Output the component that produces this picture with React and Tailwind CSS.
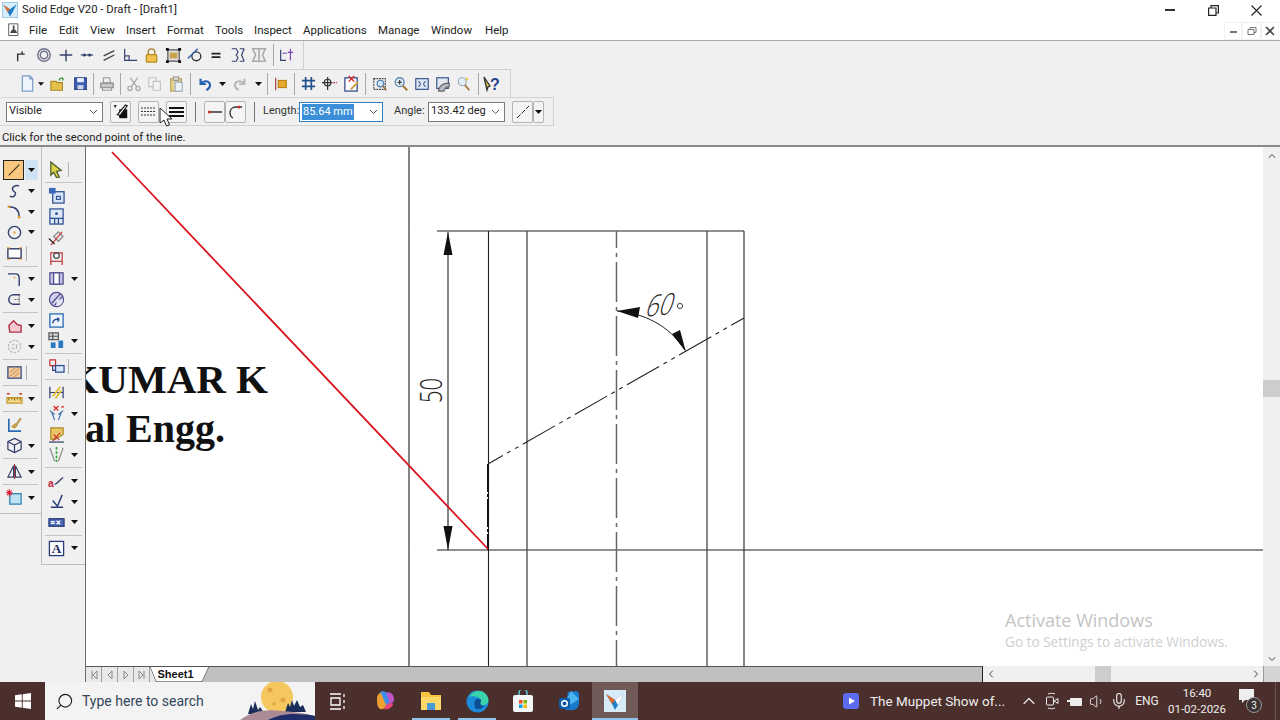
import { ChevronUp, ChevronLeft, ChevronRight, Search, Volume1, Mic } from 'lucide-react';

const Icon = ({ size = 18, children }) => (
  <svg width={size} height={size} viewBox="0 0 18 18" fill="none" strokeWidth="1.3">
    {children}
  </svg>
);

const Drop = () => (
  <svg width="7" height="4" viewBox="0 0 7 4">
    <path d="M0 0h7L3.5 4z" fill="#111" />
  </svg>
);

// toolbar icons
const top = {
  corner: <path d="M3 16V8h8M8 8V5" stroke="#333" strokeWidth="1.6" />,
  ring: <g stroke="#6f7088"><circle cx="9" cy="9" r="7" strokeWidth="1.6" /><circle cx="9" cy="9" r="4.2" strokeWidth="1.6" /></g>,
  cross: <path d="M2 9h14M9 3v13" stroke="#34406e" strokeWidth="1.6" />,
  link: <g><path d="M2 9h14" stroke="#34406e" /><circle cx="6" cy="9" r="1.8" fill="#34406e" /><circle cx="12" cy="9" r="1.8" fill="#34406e" /></g>,
  par: <path d="M3 10 15 4M3 15 15 9" stroke="#444" strokeWidth="1.5" />,
  perp: <path d="M3 2v13h14M3 10h5v5" stroke="#34406e" />,
  lock: <g><path d="M5.5 8V5.5a3.5 3.5 0 0 1 7 0V8" stroke="#a5822a" strokeWidth="1.5" /><rect x="3.5" y="8" width="11" height="8" rx="1" fill="#f1c34e" stroke="#b58a20" /></g>,
  fit: <g><rect x="3" y="3" width="12" height="12" fill="#ddd" stroke="#555" /><rect x="5" y="6" width="8" height="6" fill="#c9a24a" /><path d="M1 1h3v3H1zM14 1h3v3h-3zM1 14h3v3H1zM14 14h3v3h-3z" fill="#111" /></g>,
  tang: <g><circle cx="10.5" cy="10.5" r="5" stroke="#333" strokeWidth="1.5" /><path d="M1 13 12 2" stroke="#2d5fa8" strokeWidth="1.5" /></g>,
  eq: <path d="M4 6.5h10v2H4zM4 10.5h10v2H4z" fill="#222" />,
  sym: <path d="M2 2h5l2 4-2 3 2 3-2 4H2M16 2h-5M16 16h-5M16 2l-3 7 3 7" stroke="#34406e" />,
  symOff: <path d="M2 2h14l-3 7 3 7H2l3-7zM9 2v14" stroke="#aaa" strokeWidth="1.8" />,
  meas: <g stroke="#7a3fb0"><path d="M3 3v12h6" stroke="#34406e" /><path d="M5 7h5M14 2v13M11 6h6" /></g>,
};

const std = {
  file: <g><path d="M3.5 1h8l3 3v13h-11z" fill="#eef4fc" stroke="#7d9cc6" /><path d="M11.5 1v3h3" stroke="#7d9cc6" /></g>,
  open: <g><path d="M1 6h6l1 1.5h6V16H1z" fill="#e6c24c" stroke="#a9892a" /><path d="M10 5c1-3 3-3 5-2m0 0-2-1m2 1-1 2" stroke="#3a9a38" strokeWidth="1.5" /></g>,
  save: <g><path d="M2 2h14v14H2z" fill="#3e5fb0" stroke="#2a4488" /><rect x="5" y="2.5" width="8" height="5" fill="#e8eefa" /><rect x="5.5" y="11" width="7" height="5" fill="#c9d4ec" /></g>,
  print: <g><path d="M5 2h7l1 6H5z" fill="#eee" stroke="#999" /><path d="M2 8h14v5H2z" fill="#c8c8c8" stroke="#8a8a8a" /><path d="M4 13h10v3H4z" fill="#eee" stroke="#999" /></g>,
  cut: <g stroke="#a9a9a9" strokeWidth="1.5"><path d="M5 2l7 10M13 2 6 12" /><circle cx="4.5" cy="14" r="2.3" /><circle cx="13.5" cy="14" r="2.3" /></g>,
  copy: <g fill="#f4f4f4" stroke="#c2c2c2"><path d="M2 2h8v10H2z" /><path d="M7 6h8v10H7z" /></g>,
  paste: <g><rect x="3" y="3" width="12" height="14" fill="#e7d28c" stroke="#b5a35c" /><rect x="6" y="1" width="6" height="4" fill="#ddd" stroke="#999" /><rect x="8" y="7" width="8" height="10" fill="#eef2f8" stroke="#9fb0c8" /></g>,
  undo: <path d="M4 3v6h6M4.5 8.5C7 5 13 5 14.5 9c1 3-1 5-4 7" stroke="#2260b4" strokeWidth="2.4" />,
  redo: <path d="M14 3v6H8M13.5 8.5C11 5 5 5 3.5 9c-1 3 1 5 4 7" stroke="#b9b9b9" strokeWidth="2.4" />,
  flag: <g><path d="M3 2v14" stroke="#a94f4f" strokeWidth="1.5" /><rect x="6" y="5" width="9" height="8" fill="#e8a92c" stroke="#b9831a" /></g>,
  grid: <path d="M6 2v14M12 2v14M2 6h14M2 12h14" stroke="#22508f" strokeWidth="1.8" />,
  snap: <g stroke="#333"><circle cx="7" cy="8" r="3.5" /><path d="M7 2v14M1 8h11" /><path d="M13 8h4" stroke="#c33" strokeDasharray="2 1" /></g>,
  pin: <g><rect x="2" y="3" width="13" height="14" fill="#fff" stroke="#2a4488" /><path d="M6 1l6 6M12 1 6 7" stroke="#d22" strokeWidth="1.4" /><path d="M8 14l7-7 1.5 1.5-7 7H8z" fill="#c9a24a" /></g>,
  zoomArea: <g><rect x="2" y="3" width="13" height="12" stroke="#444" strokeDasharray="2 1" /><circle cx="9.5" cy="8.5" r="3.7" fill="#cfe4f6" stroke="#4d7cab" /><path d="m12 11 4 5" stroke="#9b6a37" strokeWidth="1.8" /></g>,
  zoom: <g><circle cx="7.5" cy="7" r="5" fill="#dcecf8" stroke="#5c86b0" strokeWidth="1.5" /><path d="M5 7h5M7.5 4.5v5" stroke="#333" /><path d="m11 11 5 5" stroke="#a8743d" strokeWidth="2.2" /></g>,
  fitAll: <g><rect x="2" y="3" width="14" height="12" fill="#dfe9f6" stroke="#31518a" /><path d="M5 6l2.5 2.5M13 6l-2.5 2.5M5 12l2.5-2.5M13 12l-2.5-2.5" stroke="#31518a" strokeWidth="1.3" /></g>,
  hand: <g><rect x="2" y="2" width="13" height="12" fill="#e2e8f2" stroke="#31518a" /><path d="M4 17c0-5 4-9 12-9v4c-3 0-5 2-6 5z" fill="#b9bcc6" stroke="#666" /></g>,
  wand: <g><circle cx="7" cy="6.5" r="4.5" fill="#e6eef6" stroke="#9aaabc" /><path d="m10 10 5 6" stroke="#a8743d" strokeWidth="2" /><path d="M12 1l-2 5 4-2z" fill="#e8c440" /></g>,
  help: <g><path d="M1 2l6 9-2 1-1 3-3-13z" fill="#d8c548" stroke="#333" /><text x="7" y="15" fontFamily="Liberation Sans" fontWeight="700" fontSize="16" fill="#2a4488">?</text></g>,
};

const left = {
  line: <path d="M3 15 15 3" stroke="#4a3a1c" strokeWidth="1.4" />,
  curve: <path d="M14 3c-4-1-8 1-7 4s4 2 3 5-4 3-6 2" stroke="#34406e" strokeWidth="1.5" />,
  arc: <g><path d="M3 4c7 0 11 4 11 11" stroke="#34406e" strokeWidth="1.5" /><circle cx="3" cy="4" r="1.4" fill="#e89a2a" /><circle cx="14" cy="15" r="1.4" fill="#e89a2a" /></g>,
  circle: <g><circle cx="9" cy="9" r="6.5" stroke="#34406e" strokeWidth="1.5" /><circle cx="9" cy="9" r="1.2" fill="#e89a2a" /></g>,
  rect: <g><rect x="2" y="4" width="14" height="10" stroke="#34406e" strokeWidth="1.5" fill="#fff" /><path d="M1 3h3M14 3h3M1 15h3M14 15h3" stroke="#e89a2a" strokeWidth="1.4" /></g>,
  fillet: <g><path d="M2 3h8c3 0 4 2 4 5v8" stroke="#34406e" strokeWidth="1.5" /><circle cx="9" cy="7" r="1" fill="#e89a2a" /></g>,
  trim: <g><path d="M15 4H8a5 5 0 0 0 0 10h7" stroke="#34406e" strokeWidth="1.6" /><path d="M9 9h6M14 4v10" stroke="#777" strokeDasharray="2 1" /></g>,
  area: <path d="M3 9l5-5 4 4 4 1v7H4z" fill="#f3c9cf" stroke="#b3344a" strokeWidth="1.5" />,
  gear: <g stroke="#bbb" strokeWidth="1.5" strokeDasharray="2.5 1.5"><circle cx="9" cy="9" r="6.5" /><circle cx="9" cy="9" r="2.5" /></g>,
  hatch: <g><rect x="2" y="3" width="14" height="12" fill="#f0cfa4" stroke="#3d4f80" strokeWidth="1.4" /><path d="M4 13 14 5M4 9l6-5M8 14l6-5" stroke="#d99a5a" /></g>,
  dim: <g><path d="M1 8h16v6H1z" fill="#f2d98a" stroke="#c79a30" /><path d="M3 8v3M6 8v2M9 8v3M12 8v2M15 8v3" stroke="#9a7720" /><path d="M1 4h3M14 4h3" stroke="#c33" strokeWidth="1.4" /></g>,
  brush: <g><path d="M3 3v13h13" stroke="#2a6cb4" strokeWidth="1.8" /><path d="M6 11l4-3 2 2-3 3zM11 8l4-6 1 1-4 6z" fill="#d4a23c" stroke="#8a6820" strokeWidth=".6" /></g>,
  cube: <g stroke="#34406e" strokeWidth="1.3"><path d="M9 1.5 16 5v8l-7 3.5L2 13V5z" /><path d="M2 5l7 3.5L16 5M9 8.5v8" /></g>,
  mirror: <g stroke="#34406e" strokeWidth="1.2"><path d="M8 3v12H2zM10 3v12h6z" /><path d="M9 1v16" stroke="#a63a3a" /></g>,
  pt: <g><rect x="4" y="5" width="12" height="11" fill="#bfe3f3" stroke="#2a80b0" /><path d="M1 1.5l5 5M6 1.5l-5 5M3.5 0v8M0 4h7" stroke="#e0223a" strokeWidth="1.1" /></g>,
};

const right = {
  sel: <path d="M3 1l11 9-5 1 3 6-3 .5-3-5.5-3 3z" fill="#dbd34a" stroke="#4a5a2a" />,
  a: <g><rect x="5" y="5" width="12" height="12" fill="#d6e6f6" stroke="#2a4d90" /><rect x="1" y="1" width="7" height="6" fill="#3e69ba" /><rect x="9" y="10" width="4" height="3" fill="#fff" stroke="#2a4d90" /></g>,
  b: <g><rect x="2" y="1" width="14" height="16" fill="#dde7f6" stroke="#2a4d90" /><path d="M2 11h14M7 11v6M11 11v6" stroke="#2a4d90" /><circle cx="9" cy="6" r="1.5" fill="#2a4d90" /></g>,
  c: <g><path d="M6 8l5-5 5 5-5 5z" fill="#eee" stroke="#888" /><path d="M3 17l12-14" stroke="#c33" strokeWidth="1.3" /><path d="M1 10l6 6" stroke="#222" strokeWidth="1.4" /></g>,
  d: <g><rect x="3" y="4" width="12" height="9" stroke="#b33" strokeWidth="1.2" /><circle cx="9" cy="7" r="3" stroke="#444" /><path d="M3 13v4M15 13v4" stroke="#b33" /></g>,
  e: <g><rect x="2" y="3" width="14" height="12" fill="#c8c4e6" stroke="#4a4a8a" /><rect x="6" y="3" width="6" height="12" fill="#fff" stroke="#4a4a8a" /></g>,
  f: <g><circle cx="9" cy="9" r="7.5" fill="#d4d0ec" stroke="#4a4a8a" /><path d="M4 13 13 3M7 15l8-9" stroke="#4a4a8a" /><path d="M9 9h7a7 7 0 0 1-7 7z" fill="#e6e6f2" /></g>,
  g: <g><rect x="2" y="2" width="14" height="14" fill="#eef4fb" stroke="#2a6cb4" strokeWidth="1.4" /><path d="M5 12c0-4 4-5 7-4m0 0-2-2m2 2-2 2" stroke="#2a4d90" strokeWidth="1.5" /></g>,
  h: <g><path d="M1 1h10v7H1zM1 4.5h10M5 1v7" stroke="#555" fill="#ddd" /><rect x="3" y="11" width="5" height="6" fill="#2a7ac0" /><rect x="11" y="9" width="5" height="8" fill="#2a7ac0" /></g>,
  i: <g><path d="M2 2h6v6H2z" stroke="#c33" strokeWidth="1.3" /><path d="M5 8v5h6" stroke="#34406e" /><rect x="8" y="8" width="9" height="7" fill="#d8e6f6" stroke="#2a4d90" /></g>,
  j: <g><path d="M2 3v12M16 3v12M2 9h14" stroke="#34406e" /><path d="M5 13l8-10M8 15l6-8" stroke="#e3b82c" strokeWidth="1.8" /></g>,
  k: <g><path d="M4 8l3 8M14 8l-3 8M2 6l5 4M16 6l-5 4" stroke="#3d6db0" strokeWidth="1.2" /><path d="M6 1l5 5M11 1 6 6" stroke="#d22" /><path d="M14 2h3" stroke="#d22" /></g>,
  l: <g><path d="M3 2h13v7l-8 5H3z" fill="#ecc766" stroke="#a9892a" /><path d="M5 16 13 7M6 9l6 6" stroke="#c33" /><path d="M1 17h16" stroke="#34406e" /></g>,
  m: <g><path d="M9 1v16" stroke="#3aa83a" strokeWidth="1.8" strokeDasharray="3 1.5" /><path d="M2 2l5 14M16 2l-5 14" stroke="#888" strokeWidth="1.3" /></g>,
  n: <g><text x="0" y="15" fontFamily="Liberation Sans" fontSize="11" fontWeight="700" fill="#c2253a">a</text><path d="M7 12c3 0 4-4 9-7" stroke="#34406e" strokeWidth="1.5" /></g>,
  o: <g><path d="M3 15h13M5 8l5 6 5-12" stroke="#2a3a7a" strokeWidth="1.5" /></g>,
  p: <g><rect x="1" y="5" width="16" height="8" fill="#4a6ab4" stroke="#2a3a7a" /><path d="M9 7l4 4M13 7l-4 4M3 8h4M3 10h4" stroke="#fff" /></g>,
  q: <g><rect x="1.5" y="1.5" width="15" height="15" fill="#fff" stroke="#2a3a7a" strokeWidth="1.4" /><text x="4" y="14" fontFamily="Liberation Serif" fontSize="14" fontWeight="700" fill="#1c2a62">A</text></g>,
};

const Sep = () => <div className="mx-[3px] w-px h-[22px] shrink-0 bg-[#a8a8a8]" />;

const Slot = ({ w = 'w-[21px]', children }) => (
  <div className={`${w} h-full flex items-center justify-center shrink-0`}>{children}</div>
);

const Menu = () => (
  <div className="h-[20px] pt-[1px] flex items-center bg-white text-[11.500px] text-[#222]">
    <div className="w-[29px] pl-[7px] flex">
      <Icon size={15}>
        <path d="M2 1h11v14H2z" fill="#fff" stroke="#444" strokeWidth="1" />
        <path d="M7 3h2v5H7zM4 11l2-3h4l2 3v1H4z" fill="#444" />
      </Icon>
    </div>
    <span className="w-[30px]">File</span>
    <span className="w-[31px]">Edit</span>
    <span className="w-[36px]">View</span>
    <span className="w-[41px]">Insert</span>
    <span className="w-[48px]">Format</span>
    <span className="w-[39px]">Tools</span>
    <span className="w-[49px]">Inspect</span>
    <span className="w-[75px]">Applications</span>
    <span className="w-[53px]">Manage</span>
    <span className="w-[54px]">Window</span>
    <span>Help</span>
    <div className="ml-auto flex items-center">
      <span className="w-[18px] h-[18px] flex items-center justify-center border border-[#f2f2f2]">
        <span className="mt-[3px] w-[7px] h-[2px] bg-[#777]" />
      </span>
      <span className="w-[19px] h-[18px] flex items-center justify-center border border-[#f2f2f2]">
        <svg width="10" height="10" viewBox="0 0 10 10" fill="none" stroke="#777"><path d="M1 3.5h6v5H1zM3 3.5v-2h6v5H7" /></svg>
      </span>
      <span className="w-[18px] h-[18px] mr-px flex items-center justify-center border border-[#f2f2f2]">
        <svg width="10" height="10" viewBox="0 0 10 10" stroke="#444" strokeWidth="1.6"><path d="M1 1l8 8M9 1 1 9" /></svg>
      </span>
    </div>
  </div>
);

const Row1 = () => (
  <div className="h-[28px] flex">
    <div className="w-[304px] h-full flex items-center pl-[12px] border-r border-[#d0d0d0]">
      {['corner', 'ring', 'cross', 'link', 'par', 'perp', 'lock', 'fit', 'tang', 'eq', 'sym', 'symOff'].map((k) => (
        <Slot key={k} w="w-[21.500px]"><Icon size={k === 'lock' || k === 'fit' ? 17 : 16}>{top[k]}</Icon></Slot>
      ))}
      <Sep />
      <Slot w="w-[18px]"><Icon size={16}>{top.meas}</Icon></Slot>
    </div>
  </div>
);

const Row2 = () => (
  <div className="h-[28px] flex">
    <div className="w-[511px] h-full flex items-center pl-[16px] border-r border-t border-[#d0d0d0]">
      <Slot w="w-[22px]"><Icon size={17}>{std.file}</Icon></Slot>
      <Slot w="w-[6px]"><Drop /></Slot>
      <Slot w="w-[26px]"><span className="ml-[2px] flex"><Icon size={16}>{std.open}</Icon></span></Slot>
      <Slot w="w-[20px]"><Icon size={15}>{std.save}</Icon></Slot>
      <Sep />
      <Slot w="w-[20px]"><Icon size={16}>{std.print}</Icon></Slot>
      <Sep />
      <Slot w="w-[20px]"><Icon size={16}>{std.cut}</Icon></Slot>
      <Slot><Icon size={16}>{std.copy}</Icon></Slot>
      <Slot w="w-[22px]"><Icon size={16}>{std.paste}</Icon></Slot>
      <Sep />
      <Slot w="w-[22px]"><Icon size={16}>{std.undo}</Icon></Slot>
      <Slot w="w-[12px]"><Drop /></Slot>
      <Slot w="w-[24px]"><Icon size={16}>{std.redo}</Icon></Slot>
      <Slot w="w-[12px]"><Drop /></Slot>
      <Sep />
      <Slot w="w-[20px]"><Icon size={16}>{std.flag}</Icon></Slot>
      <Sep />
      <Slot><Icon size={17}>{std.grid}</Icon></Slot>
      <Slot><Icon size={17}>{std.snap}</Icon></Slot>
      <Slot w="w-[22px]"><Icon size={17}>{std.pin}</Icon></Slot>
      <Sep />
      <Slot><Icon size={16}>{std.zoomArea}</Icon></Slot>
      <Slot><Icon size={16}>{std.zoom}</Icon></Slot>
      <Slot><Icon size={16}>{std.fitAll}</Icon></Slot>
      <Slot><Icon size={16}>{std.hand}</Icon></Slot>
      <Slot w="w-[22px]"><Icon size={16}>{std.wand}</Icon></Slot>
      <Sep />
      <Slot w="w-[20px]"><Icon size={18}>{std.help}</Icon></Slot>
    </div>
  </div>
);

const Btn = ({ w = 'w-[21px]', children }) => (
  <div className={`${w} h-[22px] shrink-0 flex items-center justify-center rounded-[2px] border border-[#b4b4b4] bg-[#f4f4f4]`}>
    {children}
  </div>
);

const Select = ({ w, value, selected, focus }) => (
  <div className={`${w} h-[20px] shrink-0 flex items-center justify-between bg-white border pl-[2px] pr-[4px] ${focus ? 'border-[#2f7fc0]' : 'border-[#7a7a7a]'}`}>
    {selected ? <span className="bg-[#3b8fd8] text-white text-[11px] leading-[16px] px-px">{value}</span> : <span className="text-[11px] text-[#222] whitespace-nowrap">{value}</span>}
    <svg width="9" height="6" viewBox="0 0 9 6" fill="none" stroke="#555"><path d="M1 1l3.5 3.5L8 1" /></svg>
  </div>
);

const Row3 = () => (
  <div className="h-[29px] flex">
    <div className="w-[554px] h-full flex items-center pl-[6px] border-r border-t border-b border-[#d4d4d4] text-[11px] text-[#222]">
      <Select w="w-[97px]" value="Visible" />
      <div className="ml-[7px]">
        <Btn>
          <Icon size={16}>
            <path d="M7 6h9v10H7z" fill="#111" />
            <path d="M5 12 14 1l2 1-8 11z" fill="#fff" stroke="#111" />
            <path d="M1 2h3M2.5 1v3" stroke="#111" />
          </Icon>
        </Btn>
      </div>
      <div className="ml-[7px] relative">
        <Btn>
          <svg width="15" height="9" viewBox="0 0 15 9" stroke="#333"><path d="M0 1h15M0 4.500h15M0 8h15" strokeDasharray="2 1" /></svg>
        </Btn>
        {/* mouse pointer */}
        <svg className="absolute left-[21px] top-[6px] z-10" width="14" height="20" viewBox="0 0 14 20">
          <path d="M1 1v15l4-3 2.500 6 3-1-2.500-6h5z" fill="#fff" stroke="#222" />
        </svg>
      </div>
      <div className="ml-[7px]">
        <Btn>
          <svg width="15" height="10" viewBox="0 0 15 10" fill="#111"><path d="M0 0h15v2H0zM0 4h15v2H0zM0 8h15v2H0z" /></svg>
        </Btn>
      </div>
      <div className="mx-[8px] w-px h-[20px] bg-[#777]" />
      <div className="flex">
        <Btn><svg width="14" height="6" viewBox="0 0 14 6"><path d="M0 3h14" stroke="#333" strokeWidth="1.5" /><circle cx="1.500" cy="3" r="1.500" fill="#c33" /></svg></Btn>
        <Btn><svg width="14" height="14" viewBox="0 0 14 14" fill="none"><path d="M13 2H7C3 2 1 5 1 8s1 4 3 5" stroke="#333" strokeWidth="1.3" /><circle cx="10" cy="2" r="1.500" fill="#c33" /></svg></Btn>
      </div>
      <div className="mx-[8px] w-px h-[20px] bg-[#777]" />
      <span className="text-[#333] w-[36px]">Length:</span>
      <Select w="w-[84px]" value="85.64 mm" selected focus />
      <span className="ml-[11px] w-[34px] text-[#333]">Angle:</span>
      <Select w="w-[77px]" value="133.42 deg" />
      <div className="ml-[7px] flex">
        <Btn><svg width="14" height="14" viewBox="0 0 14 14"><path d="M1 13 13 1" stroke="#222" strokeDasharray="5 1.500" /></svg></Btn>
        <Btn w="w-[11px]"><Drop /></Btn>
      </div>
    </div>
  </div>
);

const leftTools = [
  ['curve', 1], ['arc', 1], ['circle', 1], ['rect', 2], 0,
  ['fillet', 1], ['trim', 1], 0,
  ['area', 1], ['gear', 1], 0,
  ['hatch', 2], 0,
  ['dim', 1], 0,
  ['brush', 0], ['cube', 1], 0,
  ['mirror', 1], 0,
  ['pt', 1],
];

const rightTools = [
  ['a', 0], ['b', 0], ['c', 0], ['d', 0], ['e', 1], ['f', 0], ['g', 0], ['h', 1], 0,
  ['i', 2], 0,
  ['j', 0], ['k', 1], ['l', 0], ['m', 1], 0,
  ['n', 1], ['o', 1], ['p', 1], 0,
  ['q', 1],
];

const ToolRow = ({ icon, mode, dropMl }) => (
  <div className="h-[20.700px] flex items-center pl-[5px]">
    <div className="w-[18px] flex justify-center"><Icon size={17}>{icon}</Icon></div>
    {mode === 1 && <div className={`${dropMl} flex`}><Drop /></div>}
    {mode === 2 && <div className="ml-[3px] w-px h-[15px] bg-[#b0b0b0]" />}
  </div>
);

const HSep = () => (
  <div className="h-[5.400px] flex items-center px-[3px]"><div className="w-full h-px bg-[#c4c4c4]" /></div>
);

const LeftPanel = () => (
  <div className="w-[86px] shrink-0 flex bg-[#f0f0f0] border-r border-[#6a6a6a]">
    <div className="w-[41px] h-[367px] pt-[13px] border-b border-[#bdbdbd]">
      <div className="h-[20.700px] flex items-center pl-[3px]">
        <div className="w-[21px] h-[20px] bg-[#f9c77e] border border-[#222] flex items-center justify-center">
          <Icon size={16}>{left.line}</Icon>
        </div>
        <div className="ml-px w-[13px] h-[20px] bg-[#cfe3f5] flex items-center justify-center"><Drop /></div>
      </div>
      {leftTools.map((t, i) => (t ? <ToolRow key={i} icon={left[t[0]]} mode={t[1]} dropMl="ml-[5px]" /> : <HSep key={i} />))}
    </div>
    <div className="w-[44px] h-[418px] pt-[12.500px] border-l border-b border-[#bdbdbd]">
      <ToolRow icon={right.sel} mode={2} dropMl="ml-[6px]" />
      <HSep />
      {rightTools.map((t, i) => (t ? <ToolRow key={i} icon={right[t[0]]} mode={t[1]} dropMl="ml-[6px]" /> : <HSep key={i} />))}
    </div>
  </div>
);

const Drawing = () => (
  <svg className="block w-full h-full bg-white" viewBox="86 147 1177 519" fill="none">
    <text x="268" y="393" textAnchor="end" fontFamily="Liberation Serif" fontWeight="700" fontSize="41" fill="#111">KUMAR K</text>
    <text x="225" y="442" textAnchor="end" fontFamily="Liberation Serif" fontWeight="700" fontSize="40" fill="#111">al Engg.</text>

    <path d="M409 147v519M437 231h307M437 550h826M488.500 231v435M744 231v435M448 232v318" stroke="#222" strokeWidth="1.100" />
    <path d="M527 231v435M707 231v435" stroke="#555" strokeWidth="1.400" />
    <path d="M616.500 231v435" strokeDasharray="40 5 4 5" strokeDashoffset="23" stroke="#666" strokeWidth="1.500" />
    <path d="M488 464 744 318" stroke="#222" strokeWidth="1.100" strokeDasharray="37 5 4 5 4 5" strokeDashoffset="20" />
    <path d="M488 464v86" stroke="#111" strokeWidth="2" strokeDasharray="28 2 3 2" />
    <path d="M617 311c26 2 52 14 68 39" stroke="#222" />
    <path d="M448 232l-4.500 23h9zM448 550l-4.500-24h9zM617 311l23-4-2 11zM686 352l-14-18 8-4z" fill="#111" />
    <path d="M112 152 488 549" stroke="#d8151f" strokeWidth="1.800" />

    <text transform="translate(442 403) rotate(-90)" fontFamily="Open Sans" fontWeight="300" fontSize="31" fill="#222" textLength="25" lengthAdjust="spacingAndGlyphs">50</text>
    <text transform="translate(644 317) rotate(-6) skewX(-24)" fontFamily="Open Sans" fontWeight="300" fontSize="29" fill="#222" textLength="27" lengthAdjust="spacingAndGlyphs">60</text>
    <circle cx="680" cy="306" r="2.600" stroke="#444" />

    <text x="1005" y="627" fontFamily="Open Sans" fontSize="18" fill="#c4c4c4">Activate Windows</text>
    <text x="1005" y="647" fontFamily="Open Sans" fontSize="13.600" fill="#cfcfcf">Go to Settings to activate Windows.</text>
  </svg>
);

const VScroll = () => (
  <div className="w-[17px] shrink-0 flex flex-col items-center bg-[#f0f0f0]">
    <ChevronUp size={12} strokeWidth={2} className="mt-[3px] text-[#444]" />
    <div className="mt-[218px] w-full h-[17px] bg-[#cdcdcd]" />
    <ChevronUp size={12} strokeWidth={2} className="mt-auto mb-[1px] text-[#444] rotate-180" />
  </div>
);

const SheetBar = () => (
  <div className="h-[16px] shrink-0 flex">
    <div className="w-[896px] flex bg-[#c0c0c0] border-t border-[#555]">
      <div className="w-[64px] flex bg-[#e8e8e8]">
        {['M5 2v8M10 2 6 6l4 4z', 'M9 2 5 6l4 4z', 'M5 2l4 4-4 4z', 'M4 2l4 4-4 4zM9 2v8'].map((d) => (
          <div key={d} className="w-[16px] flex items-center justify-center border-r border-[#a0a0a0]">
            <svg width="14" height="12" viewBox="0 0 14 12" fill="none" stroke="#888"><path d={d} /></svg>
          </div>
        ))}
      </div>
      <div className="relative w-[60px] h-full flex items-center justify-center bg-white text-[11px] font-bold text-[#111] font-['Liberation_Sans']">
        <svg className="absolute inset-0" width="60" height="15" viewBox="0 0 60 15" fill="none">
          <path d="M0 0 6 15H52L59 0" stroke="#222" />
          <path d="M52 15 59 0H60V15Z" fill="#c0c0c0" />
          <path d="M0 0 6 15H0Z" fill="#e8e8e8" />
        </svg>
        <span className="relative -ml-[9px]">Sheet1</span>
      </div>
    </div>
    <div className="flex-1 flex items-center bg-[#f0f0f0] border-l border-[#222]">
      <ChevronLeft size={12} strokeWidth={2} className="ml-[2px] text-[#444]" />
      <div className="ml-[98px] w-[16px] h-full bg-[#cdcdcd]" />
      <ChevronRight size={12} strokeWidth={2} className="ml-auto mr-[1px] text-[#444]" />
    </div>
    <div className="w-[17px] bg-[#d4d4d4] border-l border-[#999]" />
  </div>
);

const Task = ({ active, open, children }) => (
  <div className={`relative w-[46px] h-full flex items-center justify-center ${active ? 'bg-[#6f5a58]' : ''}`}>
    {children}
    {open && <div className={`absolute bottom-0 h-[2px] bg-[#8fc4ea] ${active ? 'left-0 right-0' : 'left-[4px] right-[4px]'}`} />}
  </div>
);

const Tray = ({ w = 'w-[22px]', children }) => (
  <div className={`${w} h-full shrink-0 flex items-center justify-center`}>{children}</div>
);

const Taskbar = () => (
  <div className="h-[38px] shrink-0 flex items-center bg-[#4b2f2c] text-white">
    <div className="w-[45px] h-full flex items-center justify-center">
      <svg width="16" height="16" viewBox="0 0 16 16" fill="#fff"><path d="M0 2.300 6.800 1.300V7.500H0zM7.700 1.200 16 0V7.500H7.700zM0 8.500H6.800V14.700L0 13.700zM7.700 8.500H16V16L7.700 14.800z" /></svg>
    </div>
    <div className="relative w-[270px] h-full flex items-center bg-[#f3f3f3] overflow-hidden">
      <Search size={19} strokeWidth={1.500} className="ml-[10px] -scale-x-100 text-[#222]" />
      <span className="ml-[8px] text-[14px] text-[#33475b]">Type here to search</span>
      <svg className="absolute right-0 top-0" width="75" height="38" viewBox="0 0 75 38">
        <circle cx="37" cy="15" r="16" fill="#f6c75e" />
        <circle cx="30" cy="8" r="2.500" fill="#e0a542" />
        <circle cx="43" cy="18" r="2.500" fill="#e0a542" />
        <circle cx="34" cy="22" r="1.800" fill="#e0a542" />
        <path d="M8 32l3-10 2 5 2-8 3 9 2-3 5 7zM45 30l3-9 2 4 2-7 2 6 3-6 3 7 3-2 3 7z" fill="#1a2c5a" />
        <path d="M0 38c12-9 26-11 42-9 12 1 22 2 33 5v4z" fill="#a98a96" />
        <path d="M28 38c14-7 30-7 47-4v4z" fill="#1f2d6a" />
      </svg>
    </div>
    <Task>
      <svg width="16" height="17" viewBox="0 0 16 17" fill="none" stroke="#fff" strokeWidth="1.300"><path d="M0 1h11M0 16h11M1 5h9v7H1z" /><path d="M14 1v3M14 7v3M14 13v3" /></svg>
    </Task>
    <div className="w-px" />
    <Task>
      <svg width="22" height="22" viewBox="0 0 22 22">
        <path d="M6 2c4-2 7 0 8 3l3 9c-1 5-5 4-7 1L6 5z" fill="#3b8fe8" />
        <path d="M13 2c4 0 7 3 7 7 0 3-2 5-4 5l-3-9z" fill="#c154c8" />
        <path d="M3 8c0-3 2-5 4-5l5 12c-1 4-4 5-6 4-3-2-3-7-3-11z" fill="#f0a030" />
        <path d="M10 19c4 1 8-1 9-5l-5-1-3 4z" fill="#e9487a" />
      </svg>
    </Task>
    <Task open>
      <svg width="22" height="20" viewBox="0 0 22 20">
        <path d="M1 1h8l2 3h10v15H1z" fill="#f6c443" />
        <path d="M1 6h20v13H1z" fill="#fbd868" />
        <rect x="7" y="12" width="8" height="7" fill="#4a9ad6" />
      </svg>
    </Task>
    <Task open>
      <svg width="23" height="23" viewBox="0 0 22 22">
        <circle cx="11" cy="11" r="10.500" fill="#1b8ad8" />
        <path d="M3 7C5 2 10 .5 14 .9c4 .8 7.500 4.600 7.500 9 0 2.600-2 4.600-5 4.600-2 0-3.500-1-3-2.500.500-1 1-2 0-3.500C11 6 5.500 5 3 7z" fill="#3ad2a8" />
        <path d="M8 12c0-3 4-4.500 6-3 1 1 .300 2-.200 3-.500 2 1 3.200 3.400 3.200-2 3-6 4-8 2.500-1.500-1.200-1.200-3.500-1.200-5.700z" fill="#0c4f96" />
      </svg>
    </Task>
    <Task>
      <svg width="22" height="22" viewBox="0 0 22 22">
        <rect x="1" y="5" width="20" height="17" rx="2" fill="#f4f6f8" />
        <path d="M7 5V3a4 4 0 0 1 8 0v2" fill="none" stroke="#5ac8d8" strokeWidth="1.500" />
        <path d="M7 10h3.500v3.500H7z" fill="#f25022" /><path d="M11.500 10H15v3.500h-3.500z" fill="#7fba00" />
        <path d="M7 14.500h3.500V18H7z" fill="#00a4ef" /><path d="M11.500 14.500H15V18h-3.500z" fill="#ffb900" />
      </svg>
    </Task>
    <Task>
      <svg width="22" height="22" viewBox="0 0 22 22">
        <path d="M10 2l8-1c2 0 3 2 3 4v8c0 3-2 7-6 7H7z" fill="#1a7ad0" />
        <path d="M13 1l8 8-9 6-4-5z" fill="#4cb4f0" />
        <rect x="1" y="8" width="11" height="11" rx="2" fill="#0d5aa8" />
        <circle cx="6.500" cy="13.500" r="2.800" fill="none" stroke="#fff" strokeWidth="1.500" />
      </svg>
    </Task>
    <Task active open>
      <svg width="22" height="22" viewBox="0 0 22 22">
        <rect x="0" y="0" width="22" height="22" fill="#d6ecf8" />
        <path d="M2 4l9 6 9-7-6 12-3 5-3-6z" fill="#1e7fc8" />
        <path d="M11 10l9-7-6 12z" fill="#fff" />
        <path d="M2 4l9 6-3 4z" fill="#e06a2a" />
      </svg>
    </Task>
    <div className="ml-auto flex items-center h-full text-[#eee]">
      <svg className="shrink-0" width="16" height="16" viewBox="0 0 16 16"><rect width="16" height="16" rx="3" fill="#5b6cf0" /><path d="M6 4.500v7l6-3.500z" fill="#fff" /></svg>
      <span className="ml-[11px] w-[130px] text-[13.500px] whitespace-nowrap">The Muppet Show of...</span>
      <div className="w-[18px]" />
      <Tray><ChevronUp size={20} strokeWidth={1.300} /></Tray>
      <div className="w-px" />
      <Tray>
        <svg width="14" height="18" viewBox="0 0 14 18" fill="none" stroke="#eee"><path d="M3 2c2-1 5-1 7 0M3 16c2 1 5 1 7 0" /><rect x="1.500" y="5" width="7" height="8" rx="1" /><path d="M9 9l4-2.500v5L9 9" /></svg>
      </Tray>
      <div className="w-px" />
      <Tray>
        <svg width="16" height="13" viewBox="0 0 16 13" fill="#eee"><rect x="3" y="3" width="12" height="8" rx="1" /><path d="M1 1v4M3 1v4M0 5h4v2H0z" /></svg>
      </Tray>
      <Tray><Volume1 size={17} strokeWidth={1.300} /></Tray>
      <Tray><Mic size={18} strokeWidth={1.500} /></Tray>
      <Tray w="w-[34px]"><span className="text-[12px]">ENG</span></Tray>
      <div className="w-[66px] shrink-0 flex flex-col items-center text-[11.500px] leading-[16px]">
        <span>16:40</span>
        <span>01-02-2026</span>
      </div>
      <div className="w-[40px] shrink-0 flex justify-center">
        <div className="relative w-[22px] h-[24px]">
          <svg width="16" height="16" viewBox="0 0 16 16" fill="#eee"><path d="M0 0h15v11H6l-3 3v-3H0z" /></svg>
          <span className="absolute left-[7px] top-[8px] w-[16px] h-[16px] rounded-full bg-[#3c3432] border border-[#999] flex items-center justify-center text-[10px]">3</span>
        </div>
      </div>
      <div className="w-[5px]" />
      <div className="w-[5px] h-full border-l border-[#6a5350]" />
    </div>
  </div>
);

export default function App() {
  return (
    <div className="w-[1280px] h-[720px] flex flex-col overflow-hidden bg-[#f0f0f0] font-['Roboto',sans-serif]">
      {/* title bar */}
      <div className="h-[20px] shrink-0 flex items-center bg-white text-[11.300px] text-[#222]">
        <div className="ml-[2px] w-[16px] h-[16px] flex">
          <svg width="16" height="16" viewBox="0 0 22 22">
            <rect x="0" y="0" width="22" height="22" rx="2" fill="#d6ecf8" stroke="#4a8fc0" />
            <path d="M2 4l9 6 9-7-6 12-3 5-3-6z" fill="#1e7fc8" />
            <path d="M2 4l9 6-3 4z" fill="#e06a2a" />
          </svg>
        </div>
        <span className="ml-[4px]">Solid Edge V20 - Draft - [Draft1]</span>
        <div className="ml-auto flex items-center">
          <span className="w-[10px] h-[1.500px] bg-[#333]" />
          <svg className="ml-[33px]" width="11" height="11" viewBox="0 0 11 11" fill="none" stroke="#222" strokeWidth="1.200"><path d="M.6 3h7.400v7.400H.6zM3 3V.6h7.400V8H8" /></svg>
          <svg className="ml-[32px] mr-[18px]" width="11" height="11" viewBox="0 0 11 11" stroke="#222" strokeWidth="1.100"><path d="M.5.500l10 10M10.500.500l-10 10" /></svg>
        </div>
      </div>
      <div className="shrink-0 border-b border-[#a8a8a8]"><Menu /></div>
      <Row1 />
      <Row2 />
      <Row3 />
      {/* prompt */}
      <div className="h-[21px] shrink-0 flex items-center pl-[2px] pt-[5px] border-b-2 border-[#8a8a8a] text-[11.300px] text-[#222]">
        Click for the second point of the line.
      </div>
      <div className="flex-1 min-h-0 flex">
        <LeftPanel />
        <div className="flex-1 min-w-0 flex flex-col">
          <div className="flex-1 min-h-0 flex">
            <div className="flex-1 min-w-0"><Drawing /></div>
            <VScroll />
          </div>
          <SheetBar />
        </div>
      </div>
      <Taskbar />
    </div>
  );
}
